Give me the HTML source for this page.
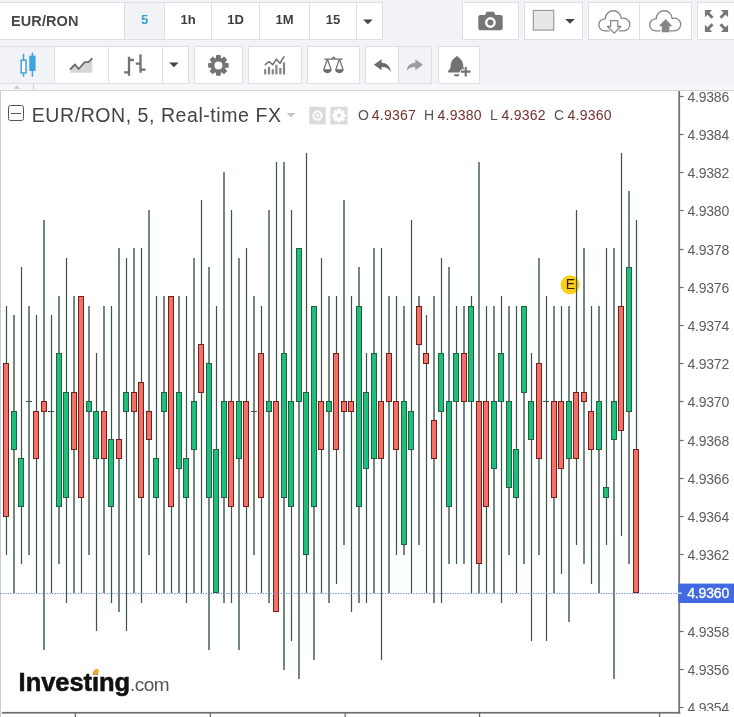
<!DOCTYPE html>
<html><head><meta charset="utf-8">
<style>
html,body{margin:0;padding:0}
body{width:734px;height:717px;overflow:hidden;background:#fff;position:relative;font-family:"Liberation Sans",sans-serif;}
#tb{will-change:transform;position:absolute;left:0;top:0;width:734px;height:91px;background:#f1f3f6;}
.b{position:absolute;box-sizing:border-box;background:#fff;border:1px solid #dcdfe3;height:38px}
.r1{top:2px}.r2{top:46px}
.sel{background:#f1f3f6}
.t{font-weight:bold;font-size:13px;color:#3d3d3d;text-align:center;line-height:34px}
.b svg{position:absolute;left:0;top:0}
#strip{position:absolute;left:0;top:84px;width:734px;height:7px;box-sizing:border-box;background:#f6f7f9;border-bottom:1px solid #d2d5d9}
#chart{will-change:transform;position:absolute;left:0;top:91px;width:734px;height:626px;background:#fff}
.pl{position:absolute;left:687.4px;font-size:14px;color:#5e5e5e;line-height:18px;height:18px;letter-spacing:-0.2px}
.tk{position:absolute;left:680px;width:4px;height:1px;background:#666}
.abs{position:absolute;white-space:nowrap}
</style></head><body>
<div id="tb">
  <div class="b r1" style="left:-1px;width:126px"><div class="abs" style="left:11px;top:0;line-height:37px;font-weight:bold;font-size:14.5px;letter-spacing:0.1px;color:#484848" id="sym">EUR/RON</div></div>
  <div class="b r1 sel t" style="left:124px;width:41px;color:#3a9fd6">5</div>
  <div class="b r1 t" style="left:164px;width:48px">1h</div>
  <div class="b r1 t" style="left:211px;width:49px">1D</div>
  <div class="b r1 t" style="left:259px;width:51px">1M</div>
  <div class="b r1 t" style="left:309px;width:48px">15</div>
  <div class="b r1" style="left:356px;width:27px"><svg width="27" height="37"><path d="M6.1 16.4h9.600l-4.800 4.800z" fill="#444"/></svg></div>

  <div class="b r1" style="left:462px;width:57px" id="cam"></div>
  <div class="b r1" style="left:524px;width:59px" id="sq"></div>
  <div class="b r1" style="left:588px;width:52px" id="cd"></div>
  <div class="b r1" style="left:639px;width:53px" id="cu"></div>
  <div class="b r1" style="left:697px;width:40px" id="fs"></div>

  <div class="b r2 sel" style="left:-1px;width:56px" id="i1"></div>
  <div class="b r2" style="left:54px;width:55px" id="i2"></div>
  <div class="b r2" style="left:108px;width:55px" id="i3"></div>
  <div class="b r2" style="left:162px;width:27px" id="i3d"><svg width="27" height="37"><path d="M6.2 15.5h9.4l-4.7 4.700z" fill="#444"/></svg></div>
  <div class="b r2" style="left:194px;width:49px" id="i4"></div>
  <div class="b r2" style="left:248px;width:54px" id="i5"></div>
  <div class="b r2" style="left:307px;width:53px" id="i6"></div>
  <div class="b r2" style="left:365px;width:34px" id="i7"></div>
  <div class="b r2 sel" style="left:398px;width:34px" id="i8"></div>
  <div class="b r2" style="left:438px;width:42px" id="i9"></div>
</div>
<div id="strip"><div style="position:absolute;left:33px;top:0;width:1px;height:6px;background:#d2d5d9"></div>
<svg width="40" height="6" style="position:absolute;left:0;top:0"><path d="M13.5 4.8l3.3-3.6 3.3 3.6z" fill="#c9cbce"/></svg></div>

<svg id="icons" width="734" height="91" style="position:absolute;left:0;top:0">
<!-- candles icon -->
<g stroke="#3da4dc" fill="none" stroke-width="1.5">
<path d="M23.5 53.7v6.3M23.5 73.2v3.6M32.4 52.5v3.7M32.4 70.5v6.3"/>
<rect x="21.2" y="60.2" width="4.8" height="12.8" fill="#fff"/>
<rect x="30" y="56.4" width="4.8" height="13.8" fill="#3da4dc"/>
</g>
<!-- area icon -->
<path d="M70.3 69.3L75 64.7L78.7 69L84.7 62.2H88.5L92.3 58.6V72.8H70.3z" fill="#d6d6d6"/>
<path d="M70.5 69L75 64.5L78.7 69L84.7 62.2H88.5L91.8 58.8" fill="none" stroke="#6a6a6a" stroke-width="1.8" stroke-linecap="round" stroke-linejoin="round"/>
<!-- bars icon -->
<path d="M129 56.7V75.7M124.2 72.4H129M129 60H133.8M140.5 54.3V72.7M135.7 63.7H140.5M140.5 69.7H145.5" fill="none" stroke="#727272" stroke-width="2.3"/>
<!-- gear -->
<g transform="translate(218.4 65.4)" fill="#747474">
<g id="gt"><path d="M-2.2 -10.300h4.400l.5 4h-5.400zM-2.200 10.300h4.400l.5-4h-5.400z"/></g>
<use href="#gt" transform="rotate(45)"/><use href="#gt" transform="rotate(90)"/><use href="#gt" transform="rotate(135)"/>
<circle r="7.4"/><circle r="4" fill="#fff"/>
</g>
<!-- indicators -->
<g fill="#858585">
<rect x="264.1" y="69.2" width="2.200" height="5.200"/><rect x="267.900" y="66.900" width="2.200" height="7.500"/><rect x="271.700" y="69.200" width="2.200" height="5.200"/><rect x="275.300" y="64.700" width="2.200" height="9.700"/><rect x="279.200" y="68" width="2.200" height="6.400"/><rect x="282.900" y="62.400" width="2.200" height="12"/>
</g>
<path d="M264.800 64.800L269 61.700L272.800 64.700L276.400 59.200L280 63.200L284.300 56.400" fill="none" stroke="#6e6e6e" stroke-width="1.500"/>
<!-- scales -->
<g fill="none" stroke="#727272" stroke-width="1.25">
<path d="M324.3 59H342.7M331.8 58.6L333.5 57L335.2 58.6"/>
<path d="M327.4 59L323.9 69.5M327.4 59L331 69.5M339.4 59L335.9 69.5M339.4 59L343 69.5"/>
</g>
<path d="M323 69.3h8.8a4.4 3.9 0 0 1 -8.8 0zM335 69.3h8.8a4.4 3.9 0 0 1 -8.8 0z" fill="#6a6a6a"/>
<!-- undo -->
<path d="M373.9 64.8L381.6 59.3V62.8C387 63 390.5 66.500 390.800 72.200C389.200 69 386.200 67.100 381.600 67.100V70.300z" fill="#6c6c6c"/>
<!-- redo -->
<path d="M423 64.8L415.3 59.3V62.8C410 63 406.9 66.1 406.8 71C408.2 68.4 410.9 67 415.3 67V70.3z" fill="#9d9d9d"/>
<!-- bell -->
<g fill="#727272">
<path d="M456.900 56.100C458.600 57.400 462.500 59.500 463.200 65C463.400 67.500 463.400 69 465.700 70.600V72.600H448.200V70.600C450.500 69 450.500 67.500 450.700 65C451.400 59.500 455.300 57.400 456.900 56.100z"/>
<path d="M453.900 74.200h5.400a2.700 2.200 0 0 1 -5.400 0z"/>
<path d="M459 73.200L461.300 69.300H467V73.200z" fill="#fff"/>
<path d="M461 71.600h9.500M465.700 66.900v9.500" stroke="#727272" stroke-width="2.100" fill="none"/>
</g>
<!-- camera -->
<g fill="#767676">
<rect x="478.3" y="14.900" width="24.400" height="15.300" rx="2.200"/>
<path d="M484.800 15.500l1.700-3.700h7.500l1.700 3.700z"/>
<circle cx="490.400" cy="22.500" r="5.400" fill="#fff"/><circle cx="490.400" cy="22.500" r="3"/>
</g>
<!-- square + dropdown -->
<rect x="533.300" y="10.400" width="20.500" height="19.700" fill="#e7e7e7" stroke="#8c8c8c" stroke-width="1"/>
<path d="M565.200 19h9.600l-4.800 4.800z" fill="#444"/>
<!-- cloud down -->
<g fill="none" stroke="#868686" stroke-width="1.3" stroke-linejoin="round" stroke-linecap="round">
<path id="cl" d="M609.1 30.9H604.4A6 6 0 0 1 605.3 18.9A7.9 7.9 0 0 1 621.2 18.5A6.4 6.4 0 1 1 623.4 30.9H619.3"/>
<path d="M610.6 20.7h7.2v5.8h2.9l-6.5 6.6l-6.7-6.6h3.1z" fill="#fff"/>
</g>
<!-- cloud up -->
<g fill="none" stroke="#868686" stroke-width="1.3" stroke-linejoin="round" stroke-linecap="round">
<use href="#cl" x="50.9"/>
</g>
<path d="M665.6 19l6.8 7.3h-3v5.9h-7.6v-5.9h-3z" fill="#868686"/>
<!-- fullscreen -->
<g fill="#777" id="fsq">
<path id="ar" d="M704.90 10.10L712.10 10.10L709.55 12.65L713.55 16.65L711.45 18.75L707.45 14.75L704.90 17.30z"/>
<use href="#ar" transform="translate(1433.0 0) scale(-1 1)"/>
<use href="#ar" transform="translate(0 42.0) scale(1 -1)"/>
<use href="#ar" transform="translate(1433.0 42.0) scale(-1 -1)"/>
</g>

</svg>

<div id="chart">
<svg width="734" height="717" style="position:absolute;left:0;top:-91px" viewBox="0 0 734 717">
<rect x="0" y="91" width="0.9" height="626" fill="#c8c8c8"/>
<circle cx="570.1" cy="284.8" r="9.5" fill="#f8d01c"/>
<text x="570.3" y="289.1" text-anchor="middle" font-family="Liberation Sans, sans-serif" font-size="14" fill="#3a1c05">E</text>
<g fill="#39554a"><rect x="5.90" y="306" width="1.2" height="249"/><rect x="13.30" y="315" width="1.4" height="278"/><rect x="20.90" y="267" width="1.2" height="297"/><rect x="28.30" y="306" width="1.4" height="249"/><rect x="35.90" y="315" width="1.2" height="278"/><rect x="43.30" y="220" width="1.4" height="430"/><rect x="50.90" y="315" width="1.2" height="278"/><rect x="58.30" y="296" width="1.4" height="268"/><rect x="65.90" y="258" width="1.2" height="345"/><rect x="73.30" y="296" width="1.4" height="297"/><rect x="80.90" y="296" width="1.2" height="297"/><rect x="88.30" y="306" width="1.4" height="249"/><rect x="95.90" y="353" width="1.2" height="278"/><rect x="103.30" y="306" width="1.4" height="287"/><rect x="110.90" y="306" width="1.2" height="297"/><rect x="118.30" y="248" width="1.4" height="364"/><rect x="125.90" y="258" width="1.2" height="373"/><rect x="133.30" y="248" width="1.4" height="345"/><rect x="140.90" y="248" width="1.2" height="355"/><rect x="148.30" y="210" width="1.4" height="345"/><rect x="155.90" y="296" width="1.2" height="297"/><rect x="163.30" y="296" width="1.4" height="297"/><rect x="170.90" y="296" width="1.2" height="297"/><rect x="178.30" y="296" width="1.4" height="297"/><rect x="185.90" y="296" width="1.2" height="307"/><rect x="193.30" y="258" width="1.4" height="335"/><rect x="200.90" y="200" width="1.2" height="393"/><rect x="208.30" y="267" width="1.4" height="383"/><rect x="215.90" y="306" width="1.2" height="287"/><rect x="223.30" y="172" width="1.4" height="431"/><rect x="230.90" y="210" width="1.2" height="393"/><rect x="238.30" y="258" width="1.4" height="392"/><rect x="245.90" y="248" width="1.2" height="345"/><rect x="253.30" y="296" width="1.4" height="259"/><rect x="260.90" y="306" width="1.2" height="287"/><rect x="268.30" y="210" width="1.4" height="393"/><rect x="275.90" y="162" width="1.2" height="450"/><rect x="283.30" y="162" width="1.4" height="508"/><rect x="290.90" y="210" width="1.2" height="431"/><rect x="298.30" y="248" width="1.4" height="431"/><rect x="305.90" y="153" width="1.2" height="440"/><rect x="313.30" y="306" width="1.4" height="354"/><rect x="320.90" y="258" width="1.2" height="335"/><rect x="328.30" y="296" width="1.4" height="307"/><rect x="335.90" y="296" width="1.2" height="288"/><rect x="343.30" y="200" width="1.4" height="345"/><rect x="350.90" y="296" width="1.2" height="316"/><rect x="358.30" y="267" width="1.4" height="336"/><rect x="365.90" y="353" width="1.2" height="250"/><rect x="373.30" y="248" width="1.4" height="345"/><rect x="380.90" y="248" width="1.2" height="412"/><rect x="388.30" y="296" width="1.4" height="297"/><rect x="395.90" y="296" width="1.2" height="259"/><rect x="403.30" y="306" width="1.4" height="249"/><rect x="410.90" y="220" width="1.2" height="373"/><rect x="418.30" y="296" width="1.4" height="249"/><rect x="425.90" y="315" width="1.2" height="278"/><rect x="433.30" y="296" width="1.4" height="307"/><rect x="440.90" y="258" width="1.2" height="345"/><rect x="448.30" y="267" width="1.4" height="297"/><rect x="455.90" y="306" width="1.2" height="258"/><rect x="463.30" y="306" width="1.4" height="258"/><rect x="470.90" y="296" width="1.2" height="297"/><rect x="478.30" y="162" width="1.4" height="431"/><rect x="485.90" y="306" width="1.2" height="287"/><rect x="493.30" y="306" width="1.4" height="287"/><rect x="500.90" y="296" width="1.2" height="307"/><rect x="508.30" y="306" width="1.4" height="249"/><rect x="515.90" y="306" width="1.2" height="287"/><rect x="523.30" y="306" width="1.4" height="258"/><rect x="530.90" y="353" width="1.2" height="288"/><rect x="538.30" y="258" width="1.4" height="297"/><rect x="545.90" y="296" width="1.2" height="345"/><rect x="553.30" y="306" width="1.4" height="287"/><rect x="560.90" y="306" width="1.2" height="268"/><rect x="568.30" y="306" width="1.4" height="316"/><rect x="575.90" y="210" width="1.2" height="335"/><rect x="583.30" y="248" width="1.4" height="316"/><rect x="590.90" y="306" width="1.2" height="278"/><rect x="598.30" y="306" width="1.4" height="287"/><rect x="605.90" y="248" width="1.2" height="297"/><rect x="613.30" y="248" width="1.4" height="431"/><rect x="620.90" y="153" width="1.2" height="383"/><rect x="628.30" y="191" width="1.4" height="373"/><rect x="635.90" y="220" width="1.2" height="373"/></g>
<g><rect x="3.5" y="363.5" width="5" height="153" fill="#f46f65" stroke="#6f211d" stroke-width="1"/><rect x="11.5" y="411.5" width="5" height="38" fill="#1ebf7b" stroke="#22603f" stroke-width="1"/><rect x="18.5" y="458.5" width="5" height="48" fill="#1ebf7b" stroke="#22603f" stroke-width="1"/><rect x="26" y="401" width="6" height="1" fill="#39554a"/><rect x="33.5" y="411.5" width="5" height="47" fill="#f46f65" stroke="#6f211d" stroke-width="1"/><rect x="41.5" y="401.5" width="5" height="10" fill="#f46f65" stroke="#6f211d" stroke-width="1"/><rect x="48" y="411" width="6" height="1" fill="#39554a"/><rect x="56.5" y="353.5" width="5" height="153" fill="#1ebf7b" stroke="#22603f" stroke-width="1"/><rect x="63.5" y="392.5" width="5" height="105" fill="#1ebf7b" stroke="#22603f" stroke-width="1"/><rect x="71.5" y="392.5" width="5" height="57" fill="#f46f65" stroke="#6f211d" stroke-width="1"/><rect x="78.5" y="296.5" width="5" height="201" fill="#f46f65" stroke="#6f211d" stroke-width="1"/><rect x="86.5" y="401.5" width="5" height="10" fill="#1ebf7b" stroke="#22603f" stroke-width="1"/><rect x="93.5" y="411.5" width="5" height="47" fill="#1ebf7b" stroke="#22603f" stroke-width="1"/><rect x="101.5" y="411.5" width="5" height="47" fill="#f46f65" stroke="#6f211d" stroke-width="1"/><rect x="108.5" y="439.5" width="5" height="67" fill="#1ebf7b" stroke="#22603f" stroke-width="1"/><rect x="116.5" y="439.5" width="5" height="19" fill="#f46f65" stroke="#6f211d" stroke-width="1"/><rect x="123.5" y="392.5" width="5" height="19" fill="#1ebf7b" stroke="#22603f" stroke-width="1"/><rect x="131.5" y="392.5" width="5" height="19" fill="#f46f65" stroke="#6f211d" stroke-width="1"/><rect x="138.5" y="382.5" width="5" height="115" fill="#f46f65" stroke="#6f211d" stroke-width="1"/><rect x="146.5" y="411.5" width="5" height="28" fill="#f46f65" stroke="#6f211d" stroke-width="1"/><rect x="153.5" y="458.5" width="5" height="39" fill="#1ebf7b" stroke="#22603f" stroke-width="1"/><rect x="161.5" y="392.5" width="5" height="19" fill="#1ebf7b" stroke="#22603f" stroke-width="1"/><rect x="168.5" y="296.5" width="5" height="210" fill="#f46f65" stroke="#6f211d" stroke-width="1"/><rect x="176.5" y="392.5" width="5" height="76" fill="#1ebf7b" stroke="#22603f" stroke-width="1"/><rect x="183.5" y="458.5" width="5" height="39" fill="#1ebf7b" stroke="#22603f" stroke-width="1"/><rect x="191.5" y="401.5" width="5" height="48" fill="#1ebf7b" stroke="#22603f" stroke-width="1"/><rect x="198.5" y="344.5" width="5" height="48" fill="#f46f65" stroke="#6f211d" stroke-width="1"/><rect x="206.5" y="363.5" width="5" height="134" fill="#1ebf7b" stroke="#22603f" stroke-width="1"/><rect x="213.5" y="449.5" width="5" height="143" fill="#1ebf7b" stroke="#22603f" stroke-width="1"/><rect x="221.5" y="401.5" width="5" height="96" fill="#1ebf7b" stroke="#22603f" stroke-width="1"/><rect x="228.5" y="401.5" width="5" height="105" fill="#f46f65" stroke="#6f211d" stroke-width="1"/><rect x="236.5" y="401.5" width="5" height="57" fill="#1ebf7b" stroke="#22603f" stroke-width="1"/><rect x="243.5" y="401.5" width="5" height="105" fill="#f46f65" stroke="#6f211d" stroke-width="1"/><rect x="251" y="411" width="6" height="1" fill="#39554a"/><rect x="258.5" y="353.5" width="5" height="144" fill="#f46f65" stroke="#6f211d" stroke-width="1"/><rect x="266.5" y="401.5" width="5" height="10" fill="#1ebf7b" stroke="#22603f" stroke-width="1"/><rect x="273.5" y="401.5" width="5" height="210" fill="#f46f65" stroke="#6f211d" stroke-width="1"/><rect x="281.5" y="353.5" width="5" height="144" fill="#1ebf7b" stroke="#22603f" stroke-width="1"/><rect x="288.5" y="401.5" width="5" height="105" fill="#1ebf7b" stroke="#22603f" stroke-width="1"/><rect x="296.5" y="248.5" width="5" height="153" fill="#1ebf7b" stroke="#22603f" stroke-width="1"/><rect x="303.5" y="392.5" width="5" height="162" fill="#1ebf7b" stroke="#22603f" stroke-width="1"/><rect x="311.5" y="306.5" width="5" height="200" fill="#1ebf7b" stroke="#22603f" stroke-width="1"/><rect x="318.5" y="401.5" width="5" height="48" fill="#f46f65" stroke="#6f211d" stroke-width="1"/><rect x="326.5" y="401.5" width="5" height="10" fill="#1ebf7b" stroke="#22603f" stroke-width="1"/><rect x="333.5" y="353.5" width="5" height="96" fill="#f46f65" stroke="#6f211d" stroke-width="1"/><rect x="341.5" y="401.5" width="5" height="10" fill="#f46f65" stroke="#6f211d" stroke-width="1"/><rect x="348.5" y="401.5" width="5" height="10" fill="#f46f65" stroke="#6f211d" stroke-width="1"/><rect x="356.5" y="306.5" width="5" height="200" fill="#1ebf7b" stroke="#22603f" stroke-width="1"/><rect x="363.5" y="392.5" width="5" height="76" fill="#1ebf7b" stroke="#22603f" stroke-width="1"/><rect x="371.5" y="353.5" width="5" height="105" fill="#1ebf7b" stroke="#22603f" stroke-width="1"/><rect x="378.5" y="401.5" width="5" height="57" fill="#f46f65" stroke="#6f211d" stroke-width="1"/><rect x="386.5" y="353.5" width="5" height="48" fill="#f46f65" stroke="#6f211d" stroke-width="1"/><rect x="393.5" y="401.5" width="5" height="48" fill="#f46f65" stroke="#6f211d" stroke-width="1"/><rect x="401.5" y="401.5" width="5" height="143" fill="#1ebf7b" stroke="#22603f" stroke-width="1"/><rect x="408.5" y="411.5" width="5" height="38" fill="#1ebf7b" stroke="#22603f" stroke-width="1"/><rect x="416.5" y="306.5" width="5" height="38" fill="#f46f65" stroke="#6f211d" stroke-width="1"/><rect x="423.5" y="353.5" width="5" height="10" fill="#f46f65" stroke="#6f211d" stroke-width="1"/><rect x="431.5" y="420.5" width="5" height="38" fill="#f46f65" stroke="#6f211d" stroke-width="1"/><rect x="438.5" y="353.5" width="5" height="58" fill="#1ebf7b" stroke="#22603f" stroke-width="1"/><rect x="446.5" y="401.5" width="5" height="105" fill="#1ebf7b" stroke="#22603f" stroke-width="1"/><rect x="453.5" y="353.5" width="5" height="48" fill="#1ebf7b" stroke="#22603f" stroke-width="1"/><rect x="461.5" y="353.5" width="5" height="48" fill="#f46f65" stroke="#6f211d" stroke-width="1"/><rect x="468.5" y="306.5" width="5" height="95" fill="#1ebf7b" stroke="#22603f" stroke-width="1"/><rect x="476.5" y="401.5" width="5" height="162" fill="#f46f65" stroke="#6f211d" stroke-width="1"/><rect x="483.5" y="401.5" width="5" height="105" fill="#f46f65" stroke="#6f211d" stroke-width="1"/><rect x="491.5" y="401.5" width="5" height="67" fill="#1ebf7b" stroke="#22603f" stroke-width="1"/><rect x="498.5" y="353.5" width="5" height="48" fill="#1ebf7b" stroke="#22603f" stroke-width="1"/><rect x="506.5" y="401.5" width="5" height="86" fill="#1ebf7b" stroke="#22603f" stroke-width="1"/><rect x="513.5" y="449.5" width="5" height="48" fill="#1ebf7b" stroke="#22603f" stroke-width="1"/><rect x="521.5" y="306.5" width="5" height="86" fill="#1ebf7b" stroke="#22603f" stroke-width="1"/><rect x="528.5" y="401.5" width="5" height="38" fill="#1ebf7b" stroke="#22603f" stroke-width="1"/><rect x="536.5" y="363.5" width="5" height="95" fill="#f46f65" stroke="#6f211d" stroke-width="1"/><rect x="543" y="401" width="6" height="1" fill="#39554a"/><rect x="551.5" y="401.5" width="5" height="96" fill="#f46f65" stroke="#6f211d" stroke-width="1"/><rect x="558.5" y="401.5" width="5" height="67" fill="#f46f65" stroke="#6f211d" stroke-width="1"/><rect x="566.5" y="401.5" width="5" height="57" fill="#1ebf7b" stroke="#22603f" stroke-width="1"/><rect x="573.5" y="392.5" width="5" height="66" fill="#f46f65" stroke="#6f211d" stroke-width="1"/><rect x="581.5" y="392.5" width="5" height="9" fill="#f46f65" stroke="#6f211d" stroke-width="1"/><rect x="588.5" y="411.5" width="5" height="38" fill="#f46f65" stroke="#6f211d" stroke-width="1"/><rect x="596.5" y="401.5" width="5" height="48" fill="#1ebf7b" stroke="#22603f" stroke-width="1"/><rect x="603.5" y="487.5" width="5" height="10" fill="#1ebf7b" stroke="#22603f" stroke-width="1"/><rect x="611.5" y="401.5" width="5" height="38" fill="#1ebf7b" stroke="#22603f" stroke-width="1"/><rect x="618.5" y="306.5" width="5" height="124" fill="#f46f65" stroke="#6f211d" stroke-width="1"/><rect x="626.5" y="267.5" width="5" height="144" fill="#1ebf7b" stroke="#22603f" stroke-width="1"/><rect x="633.5" y="449.5" width="5" height="143" fill="#f46f65" stroke="#6f211d" stroke-width="1"/></g>
<line x1="0" y1="593.5" x2="679" y2="593.5" stroke="#6d8be0" stroke-width="1" stroke-dasharray="1.3 1.3"/>
<rect x="678.3" y="91" width="1.8" height="622.6" fill="#747474"/>
<g fill="#6e6e6e"><rect x="680" y="95.90" width="3.6" height="1.2"/><rect x="680" y="133.90" width="3.6" height="1.2"/><rect x="680" y="171.90" width="3.6" height="1.2"/><rect x="680" y="209.90" width="3.6" height="1.2"/><rect x="680" y="248.90" width="3.6" height="1.2"/><rect x="680" y="286.90" width="3.6" height="1.2"/><rect x="680" y="324.90" width="3.6" height="1.2"/><rect x="680" y="362.90" width="3.6" height="1.2"/><rect x="680" y="400.90" width="3.6" height="1.2"/><rect x="680" y="439.90" width="3.6" height="1.2"/><rect x="680" y="477.90" width="3.6" height="1.2"/><rect x="680" y="515.90" width="3.6" height="1.2"/><rect x="680" y="553.90" width="3.6" height="1.2"/><rect x="680" y="630.90" width="3.6" height="1.2"/><rect x="680" y="668.90" width="3.6" height="1.2"/><rect x="680" y="706.90" width="3.6" height="1.2"/></g>
<rect x="678.3" y="583.6" width="56" height="19.4" fill="#4169e1"/><rect x="678.3" y="592.6" width="3.5" height="1.2" fill="#fff"/>
<rect x="2" y="711.9" width="678.3" height="1.7" fill="#6e6e6e"/>
<g fill="#6e6e6e"><rect x="74.7" y="713" width="1.3" height="5"/><rect x="209.7" y="713" width="1.3" height="5"/><rect x="344.6" y="713" width="1.3" height="5"/><rect x="478.9" y="713" width="1.3" height="5"/><rect x="658.9" y="713" width="1.3" height="5"/></g>
<g>
<rect x="309.2" y="106.8" width="16.5" height="17.6" fill="#dbdbdb"/>
<circle cx="317.5" cy="115.6" r="4.1" fill="none" stroke="#fff" stroke-width="2"/><circle cx="317.5" cy="115.6" r="1.5" fill="#fff"/>
<rect x="330.4" y="106.8" width="17.2" height="17.6" fill="#dbdbdb"/>
<g transform="translate(339 115.6)" fill="#fff"><circle r="4.9"/><g id="tth"><rect x="-1.6" y="-6.8" width="3.2" height="13.6"/></g><use href="#tth" transform="rotate(45)"/><use href="#tth" transform="rotate(90)"/><use href="#tth" transform="rotate(135)"/><circle r="2.1" fill="#dbdbdb"/></g>
</g>

</svg>
<div style="position:absolute;left:0;top:-91px;width:734px;height:717px">
<div style="position:absolute;left:680px;top:91px;width:54px;height:620px;overflow:hidden"><div style="position:absolute;left:-680px;top:-91px"><div class="pl" style="top:88.1px">4.9386</div><div class="pl" style="top:126.1px">4.9384</div><div class="pl" style="top:164.1px">4.9382</div><div class="pl" style="top:202.1px">4.9380</div><div class="pl" style="top:241.1px">4.9378</div><div class="pl" style="top:279.1px">4.9376</div><div class="pl" style="top:317.1px">4.9374</div><div class="pl" style="top:355.1px">4.9372</div><div class="pl" style="top:393.1px">4.9370</div><div class="pl" style="top:432.1px">4.9368</div><div class="pl" style="top:470.1px">4.9366</div><div class="pl" style="top:508.1px">4.9364</div><div class="pl" style="top:546.1px">4.9362</div><div class="pl" style="top:623.1px">4.9358</div><div class="pl" style="top:661.1px">4.9356</div><div class="pl" style="top:699.1px">4.9354</div></div></div>

<div class="abs" style="left:687.2px;top:584.4px;font-size:14px;line-height:18px;color:#fff;letter-spacing:-0.15px;-webkit-text-stroke:0.35px #fff">4.9360</div>

<div style="position:absolute;left:8px;top:105px;width:16px;height:16px;box-sizing:border-box;border:1px solid #555;border-radius:2.5px"><div style="position:absolute;left:2px;top:7px;width:10px;height:1px;background:#555"></div></div>
<div class="abs" id="title" style="left:31.8px;top:103px;font-size:19.5px;line-height:24px;color:#444;letter-spacing:0.56px">EUR/RON, 5, Real-time FX</div>
<svg width="12" height="8" style="position:absolute;left:286px;top:111px"><path d="M0.5 2h9l-4.5 4.6z" fill="#c6c6c6"/></svg>
<div class="abs ohlc" style="left:358px">O</div><div class="abs ohlc v" style="left:371.8px">4.9367</div>
<div class="abs ohlc" style="left:424px">H</div><div class="abs ohlc v" style="left:437.5px">4.9380</div>
<div class="abs ohlc" style="left:490px">L</div><div class="abs ohlc v" style="left:501.5px">4.9362</div>
<div class="abs ohlc" style="left:554px">C</div><div class="abs ohlc v" style="left:567.5px">4.9360</div>

<div class="abs" id="logo" style="left:18.6px;top:666px;line-height:32px;color:#111"><span id="inv" style="font-weight:bold;font-size:25.5px;letter-spacing:-0.05px;-webkit-text-stroke:0.55px #111">Investing</span><span id="com" style="font-size:19px;color:#555;letter-spacing:-0.6px">.com</span></div>
<svg width="12" height="12" style="position:absolute;left:90px;top:666px"><ellipse cx="6" cy="6" rx="2.4" ry="3.3" fill="#f2a92f" transform="rotate(35 6 6)"/></svg>
</div>
</div>
<style>.ohlc{top:106.2px;font-size:14px;line-height:18px;color:#555;letter-spacing:0.25px}.ohlc.v{color:#743030}</style>
</body></html>
